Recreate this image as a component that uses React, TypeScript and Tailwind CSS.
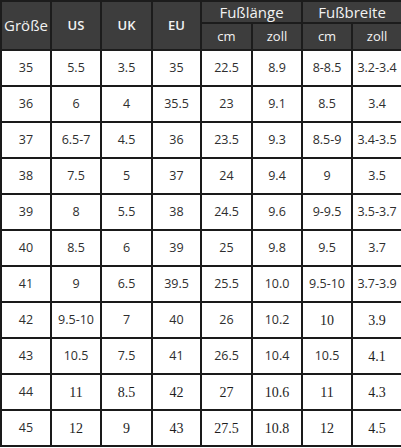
const SANS = "font-['Open_Sans',sans-serif]";
const SERIF = "font-['Liberation_Serif',serif]";

// s = sans cell, r = serif cell
const ROWS: [string, 's' | 'r'][][] = [
  [['35', 's'], ['5.5', 's'], ['3.5', 's'], ['35', 's'], ['22.5', 's'], ['8.9', 's'], ['8-8.5', 's'], ['3.2-3.4', 's']],
  [['36', 's'], ['6', 's'], ['4', 's'], ['35.5', 's'], ['23', 's'], ['9.1', 's'], ['8.5', 's'], ['3.4', 's']],
  [['37', 's'], ['6.5-7', 's'], ['4.5', 's'], ['36', 's'], ['23.5', 's'], ['9.3', 's'], ['8.5-9', 's'], ['3.4-3.5', 's']],
  [['38', 's'], ['7.5', 's'], ['5', 's'], ['37', 's'], ['24', 's'], ['9.4', 's'], ['9', 's'], ['3.5', 's']],
  [['39', 's'], ['8', 's'], ['5.5', 's'], ['38', 's'], ['24.5', 's'], ['9.6', 's'], ['9-9.5', 's'], ['3.5-3.7', 's']],
  [['40', 's'], ['8.5', 's'], ['6', 's'], ['39', 's'], ['25', 's'], ['9.8', 's'], ['9.5', 's'], ['3.7', 's']],
  [['41', 's'], ['9', 's'], ['6.5', 's'], ['39.5', 's'], ['25.5', 's'], ['10.0', 's'], ['9.5-10', 's'], ['3.7-3.9', 's']],
  [['42', 's'], ['9.5-10', 's'], ['7', 's'], ['40', 's'], ['26', 's'], ['10.2', 's'], ['10', 'r'], ['3.9', 'r']],
  [['43', 's'], ['10.5', 's'], ['7.5', 's'], ['41', 's'], ['26.5', 's'], ['10.4', 's'], ['10.5', 's'], ['4.1', 'r']],
  [['44', 's'], ['11', 'r'], ['8.5', 'r'], ['42', 'r'], ['27', 'r'], ['10.6', 'r'], ['11', 'r'], ['4.3', 'r']],
  [['45', 's'], ['12', 'r'], ['9', 'r'], ['43', 'r'], ['27.5', 'r'], ['10.8', 'r'], ['12', 'r'], ['4.5', 'r']],
];

const WIDTHS = ['w-[50px]', 'w-[50px]', 'w-[51px]', 'w-[49px]', 'w-[51px]', 'w-[50px]', 'w-[50px]', 'w-[50px]'];

export default function App() {
  return (
    <div className="w-[401px] h-[448px] bg-white overflow-hidden">
      <table className="w-[401px] table-fixed border-collapse text-center">
        <colgroup>
          {WIDTHS.map((w, i) => (
            <col key={i} className={w} />
          ))}
        </colgroup>
        <thead className={`bg-[#3d3d3d] text-[#f2f2f2] ${SANS}`}>
          <tr className="h-[22px]">
            <th rowSpan={2} className="border-2 border-[#1c1c1c] text-[15px] font-normal p-0">Größe</th>
            <th rowSpan={2} className="border-2 border-[#1c1c1c] text-[13px] font-semibold p-0">US</th>
            <th rowSpan={2} className="border-2 border-[#1c1c1c] text-[13px] font-semibold p-0">UK</th>
            <th rowSpan={2} className="border-2 border-[#1c1c1c] text-[13px] font-semibold p-0">EU</th>
            <th colSpan={2} className="border-2 border-[#1c1c1c] text-[15px] font-normal p-0 leading-[18px]">Fußlänge</th>
            <th colSpan={2} className="border-2 border-[#1c1c1c] text-[15px] font-normal p-0 leading-[18px]">Fußbreite</th>
          </tr>
          <tr className="h-[27px]">
            <th className="border-2 border-[#1c1c1c] text-[13px] font-normal p-0">cm</th>
            <th className="border-2 border-[#1c1c1c] text-[13px] font-medium p-0">zoll</th>
            <th className="border-2 border-[#1c1c1c] text-[13px] font-normal p-0">cm</th>
            <th className="border-2 border-[#1c1c1c] text-[13px] font-medium p-0">zoll</th>
          </tr>
        </thead>
        <tbody className="text-[#2e2e2e]">
          {ROWS.map((row, i) => (
            <tr key={i} className="h-[36px]">
              {row.map(([v, f], j) => (
                <td
                  key={j}
                  className={`border-2 border-[#1a1a1a] p-0 ${
                    f === 's' ? `${SANS} text-[12.5px]` : `${SERIF} text-[14px] text-[#1e1e1e]`
                  }`}
                >
                  {v}
                </td>
              ))}
            </tr>
          ))}
        </tbody>
      </table>
    </div>
  );
}
